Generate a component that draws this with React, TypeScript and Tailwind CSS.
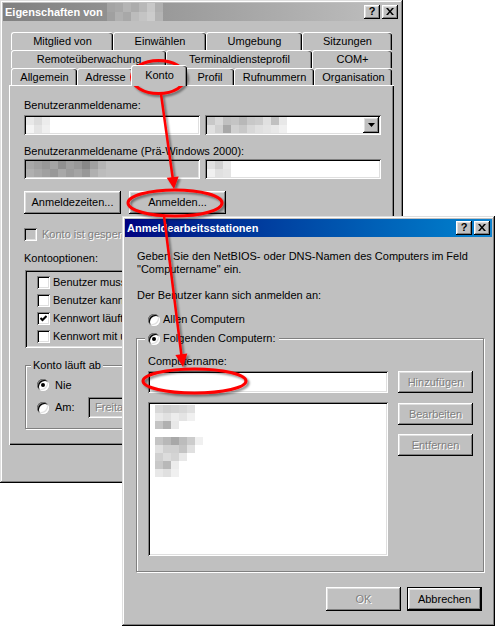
import React from 'react';

// classic 3D edges
const raised = 'shadow-[inset_-1px_-1px_0_#000,inset_1px_1px_0_#fff,inset_-2px_-2px_0_#808080,inset_2px_2px_0_#dfdfdf]';
const defaultRaised = 'shadow-[inset_0_0_0_1px_#000,inset_-2px_-2px_0_#000,inset_2px_2px_0_#fff,inset_-3px_-3px_0_#808080,inset_3px_3px_0_#dfdfdf]';
const sunken = 'shadow-[inset_1px_1px_0_#808080,inset_-1px_-1px_0_#fff,inset_2px_2px_0_#000,inset_-2px_-2px_0_#dfdfdf]';
const frame = 'shadow-[inset_-1px_-1px_0_#000,inset_1px_1px_0_#dfdfdf,inset_-2px_-2px_0_#808080,inset_2px_2px_0_#fff]';
const etched = 'border border-[#808080] shadow-[inset_1px_1px_0_#fff,1px_1px_0_#fff]';
const disabledText = 'text-[#808080] [text-shadow:1px_1px_0_#fff]';

// pixelated (blurred) names
const Mosaic = ({ rows, w = 8, h = 8 }: { rows: string[][]; w?: number; h?: number }) => (
  <div className="flex flex-col">
    {rows.map((r, i) => (
      <div key={i} className="flex">
        {r.map((c, j) => (
          <div key={j} style={{ width: w, height: h, background: c }} />
        ))}
      </div>
    ))}
  </div>
);

const TitleButtons = () => (
  <div className="flex gap-[2px]">
    <div className={`w-[16px] h-[14px] bg-[#c0c0c0] ${raised} flex items-center justify-center text-[11px] font-bold leading-none text-black pb-[1px]`}>
      ?
    </div>
    <div className={`w-[16px] h-[14px] bg-[#c0c0c0] ${raised} flex items-center justify-center pb-[1px]`}>
      <svg width="8" height="7" viewBox="0 0 8 7">
        <path d="M0 0h2l2 2.4L6 0h2L5 3.5 8 7H6L4 4.6 2 7H0l3-3.5z" fill="#000" />
      </svg>
    </div>
  </div>
);

const Btn = ({
  label,
  className = '',
  disabled = false,
  isDefault = false,
}: {
  label: string;
  className?: string;
  disabled?: boolean;
  isDefault?: boolean;
}) => (
  <div
    className={`flex items-center justify-center bg-[#c0c0c0] ${isDefault ? defaultRaised : raised} ${
      disabled ? disabledText : 'text-black'
    } ${className}`}
  >
    {label}
  </div>
);

const Check = ({ checked = false, disabled = false }: { checked?: boolean; disabled?: boolean }) => (
  <div className={`w-[13px] h-[13px] shrink-0 flex items-center justify-center ${disabled ? 'bg-[#c0c0c0]' : 'bg-white'} ${sunken}`}>
    {checked && (
      <svg width="7" height="7" viewBox="0 0 7 7">
        <polyline points="0.5,3 2.5,5 6.5,1" fill="none" stroke="#000" strokeWidth="2" />
      </svg>
    )}
  </div>
);

const Radio = ({ checked = false }: { checked?: boolean }) => (
  <div className={`w-[12px] h-[12px] shrink-0 rounded-full bg-white flex items-center justify-center ${sunken}`}>
    {checked && <div className="w-[4px] h-[4px] rounded-full bg-black" />}
  </div>
);

const tabBase =
  'bg-[#c0c0c0] border-l border-t border-white rounded-t-[3px] shadow-[inset_-1px_0_0_#000,inset_-2px_0_0_#808080] text-center whitespace-nowrap';

const Tab = ({ label, className, selected = false }: { label: string; className: string; selected?: boolean }) =>
  selected ? (
    <div className={`${tabBase} relative z-10 -mx-[2px] -mt-[3px] h-[21px] pt-[1px] leading-[17px] ${className}`}>{label}</div>
  ) : (
    <div className={`${tabBase} h-full leading-[16px] ${className}`}>{label}</div>
  );

const PropertiesDialog = () => (
  <div className={`absolute left-0 top-0 w-[403px] h-[483px] bg-[#c0c0c0] p-[3px] ${frame}`}>
    <div className="h-[18px] flex items-center bg-linear-to-r from-[#808080] to-[#c0c0c0] px-[2px]">
      <span className="font-bold text-white">Eigenschaften von</span>
      <div className="ml-[4px]">
        <Mosaic
          w={8}
          h={9}
          rows={[
            ['#a4a4a4', '#a8a8a8', '#b4b4b4', '#acacac', '#b8b8b8', '#c8c8c8', '#b0b0b0'],
            ['#a0a0a0', '#b0b0b0', '#a8a8a8', '#bcbcbc', '#c4c4c4', '#cccccc', '#b4b4b4'],
          ]}
        />
      </div>
      <div className="ml-auto">
        <TitleButtons />
      </div>
    </div>

    <div className="ml-[6px] mt-[11px] w-[385px]">
      <div className="flex h-[18px] pl-[2px]">
        <Tab label="Mitglied von" className="w-[102px]" />
        <Tab label="Einwählen" className="w-[93px]" />
        <Tab label="Umgebung" className="w-[96px]" />
        <Tab label="Sitzungen" className="w-[90px]" />
      </div>
      <div className="flex h-[18px] pl-[2px]">
        <Tab label="Remoteüberwachung" className="w-[155px]" />
        <Tab label="Terminaldiensteprofil" className="w-[146px]" />
        <Tab label="COM+" className="w-[80px]" />
      </div>
      <div className="flex h-[17px] pl-[2px]">
        <Tab label="Allgemein" className="w-[66px]" />
        <Tab label="Adresse" className="w-[56px]" />
        <Tab label="Konto" className="w-[56px]" selected />
        <Tab label="Profil" className="w-[49px]" />
        <Tab label="Rufnummern" className="w-[80px]" />
        <Tab label="Organisation" className="w-[78px]" />
      </div>

      <div className="h-[360px] border-l border-t border-white shadow-[inset_-1px_-1px_0_#000,inset_-2px_-2px_0_#808080] pl-[14px] pt-[13px]">
        <div className="h-[13px] leading-[13px]">Benutzeranmeldename:</div>
        <div className="mt-[3px] flex gap-[5px]">
          <div className={`w-[176px] h-[20px] bg-white p-[2px] ${sunken}`}>
            <Mosaic rows={[['#e8e8e8', '#dcdcdc', '#ececec'], ['#f4f4f4', '#e4e4e4', '#f0f0f0']]} />
          </div>
          <div className={`w-[176px] h-[20px] bg-white p-[2px] flex ${sunken}`}>
            <Mosaic
              rows={[
                ['#c8c8c8', '#d8d8d8', '#c0c0c0', '#c4c4c4', '#b8b8b8', '#c8c8c8', '#cccccc', '#e0e0e0', '#c0c0c0', '#e8e8e8'],
                ['#e0e0e0', '#d0d0d0', '#a8a8a8', '#d0d0d0', '#c8c8c8', '#d8d8d8', '#e0e0e0', '#e4e4e4', '#e8e8e8', '#f0f0f0'],
              ]}
            />
            <div className={`ml-auto w-[16px] h-[16px] bg-[#c0c0c0] flex items-center justify-center ${raised}`}>
              <svg width="7" height="4" viewBox="0 0 7 4">
                <path d="M0 0h7L3.5 4z" fill="#000" />
              </svg>
            </div>
          </div>
        </div>

        <div className="mt-[10px] h-[13px] leading-[13px]">Benutzeranmeldename (Prä-Windows 2000):</div>
        <div className="mt-[1px] flex gap-[5px]">
          <div className={`w-[176px] h-[20px] bg-[#c0c0c0] p-[2px] ${sunken}`}>
            <Mosaic
              rows={[
                ['#a8a8a8', '#a0a0a0', '#989898', '#a4a4a4', '#909090', '#a0a0a0', '#989898', '#888888', '#a0a0a0', '#b4b4b4'],
                ['#b0b0b0', '#a8a8a8', '#a0a0a0', '#989898', '#a8a8a8', '#9c9c9c', '#a4a4a4', '#989898', '#b0b0b0', '#bcbcbc'],
              ]}
            />
          </div>
          <div className={`w-[176px] h-[20px] bg-white p-[2px] ${sunken}`}>
            <Mosaic rows={[['#e0e0e0', '#d0d0d0', '#e8e8e8'], ['#f0f0f0', '#e0e0e0', '#e4e4e4']]} />
          </div>
        </div>

        <div className="mt-[12px] flex gap-[8px]">
          <Btn label="Anmeldezeiten..." className="w-[97px] h-[23px]" />
          <Btn label="Anmelden..." className="w-[97px] h-[23px]" />
        </div>

        <div className="mt-[14px] h-[13px] flex items-center gap-[5px]">
          <Check disabled />
          <span className={disabledText}>Konto ist gesperrt</span>
        </div>

        <div className="mt-[11px] h-[13px] leading-[13px]">Kontooptionen:</div>
        <div className={`mt-[5px] ml-[1px] w-[356px] h-[78px] bg-[#c0c0c0] pt-[3px] pl-[12px] ${sunken}`}>
          {[
            ['Benutzer muss Kennwort bei der nächsten Anmeldung ändern', false],
            ['Benutzer kann Kennwort nicht ändern', false],
            ['Kennwort läuft nie ab', true],
            ['Kennwort mit umkehrbarer Verschlüsselung speichern', false],
          ].map(([label, checked]) => (
            <div key={label as string} className="h-[18px] flex items-center gap-[3px]">
              <Check checked={checked as boolean} />
              <span>{label as string}</span>
            </div>
          ))}
        </div>

        <div className={`relative mt-[17px] ml-[1px] w-[356px] h-[64px] pl-[11px] pt-[13px] ${etched}`}>
          <div className="absolute -top-[7px] left-[5px] bg-[#c0c0c0] px-[2px] leading-[13px]">Konto läuft ab</div>
          <div className="h-[12px] flex items-center gap-[6px]">
            <Radio checked />
            <span>Nie</span>
          </div>
          <div className="mt-[6px] h-[21px] flex items-center gap-[6px]">
            <Radio />
            <span className="w-[27px]">Am:</span>
            <div className={`w-[260px] h-[21px] bg-[#c0c0c0] pl-[7px] flex items-center ${sunken}`}>
              <span className={disabledText}>Freitag, 1. Juni 2001</span>
            </div>
          </div>
        </div>
      </div>
    </div>

    <div className="mt-[8px] flex justify-end gap-[6px] pr-[6px]">
      <Btn label="OK" className="w-[75px] h-[23px]" isDefault />
      <Btn label="Abbrechen" className="w-[75px] h-[23px]" />
      <Btn label="Übernehmen" className="w-[75px] h-[23px]" />
    </div>
  </div>
);

const WorkstationsDialog = () => (
  <div className={`absolute left-[122px] top-[216px] w-[373px] h-[410px] bg-[#c0c0c0] p-[3px] ${frame}`}>
    <div className="h-[18px] flex items-center bg-linear-to-r from-[#000080] to-[#1084d0] px-[2px]">
      <span className="font-bold text-white">Anmeldearbeitsstationen</span>
      <div className="ml-auto">
        <TitleButtons />
      </div>
    </div>

    <div className="pl-[12px] mt-[13px] leading-[13px]">
      Geben Sie den NetBIOS- oder DNS-Namen des Computers im Feld
      <br />
      "Computername" ein.
    </div>
    <div className="pl-[12px] mt-[13px] leading-[13px]">Der Benutzer kann sich anmelden an:</div>
    <div className="ml-[23px] mt-[11px] h-[13px] flex items-center gap-[3px]">
      <Radio />
      <span>Allen Computern</span>
    </div>

    <div className={`relative ml-[11px] mt-[12px] w-[348px] h-[234px] pl-[11px] ${etched}`}>
      <div className="absolute -top-[7px] left-[8px] bg-[#c0c0c0] px-[3px] h-[13px] flex items-center gap-[3px]">
        <Radio checked />
        <span>Folgenden Computern:</span>
      </div>
      <div className="pt-[16px] h-[29px] leading-[13px]">Computername:</div>
      <div className="mt-[3px] flex gap-[10px]">
        <div className={`w-[240px] h-[22px] bg-white ${sunken}`} />
        <Btn label="Hinzufügen" className="w-[75px] h-[22px]" disabled />
      </div>
      <div className="mt-[9px] flex gap-[10px]">
        <div className={`w-[240px] h-[154px] bg-white pl-[7px] pt-[3px] ${sunken}`}>
          <Mosaic
            rows={[
              ['#d8d8d8', '#d0d0d0', '#d4d4d4', '#d8d8d8', '#e0e0e0'],
              ['#e8e8e8', '#e0e0e0', '#ececec', '#e4e4e4', '#f0f0f0'],
              ['#c4c4c4', '#b0b0b0', '#e8e8e8', '#ffffff', '#ffffff'],
            ]}
          />
          <div className="mt-[8px]">
            <Mosaic
              rows={[
                ['#c4c4c4', '#b8b8b8', '#a8a8a8', '#bcbcbc', '#cccccc', '#f0f0f0'],
                ['#e0e0e0', '#d0d0d0', '#d0d0d0', '#c4c4c4', '#e0e0e0', '#ffffff'],
                ['#d0d0d0', '#dcdcdc', '#d4d4d4', '#e8e8e8', '#ffffff', '#ffffff'],
                ['#c8c8c8', '#b8b8b8', '#ececec', '#ffffff', '#ffffff', '#ffffff'],
                ['#e8e8e8', '#e0e0e0', '#f0f0f0', '#ffffff', '#ffffff', '#ffffff'],
              ]}
            />
          </div>
        </div>
        <div className="flex flex-col">
          <Btn label="Bearbeiten" className="mt-[1px] w-[75px] h-[22px]" disabled />
          <Btn label="Entfernen" className="mt-[9px] w-[75px] h-[22px]" disabled />
        </div>
      </div>
    </div>

    <div className="mt-[15px] flex justify-end gap-[6px] pr-[10px]">
      <Btn label="OK" className="w-[75px] h-[24px]" disabled />
      <Btn label="Abbrechen" className="w-[75px] h-[24px]" isDefault />
    </div>
  </div>
);

// red hand-drawn marks over the screenshot
const Annotations = () => (
  <svg className="absolute left-0 top-0 pointer-events-none" width="496" height="627" viewBox="0 0 496 627">
    <defs>
      <filter id="markShadow" x="-20%" y="-20%" width="140%" height="140%">
        <feDropShadow dx="2" dy="2" stdDeviation="1.2" floodColor="#000" floodOpacity="0.45" />
      </filter>
    </defs>
    <g filter="url(#markShadow)" stroke="#ff0000" strokeWidth="3" fill="none" strokeLinecap="round">
      <ellipse cx="158.5" cy="77" rx="27" ry="16.5" />
      <ellipse cx="175" cy="203" rx="47" ry="13" />
      <ellipse cx="194.5" cy="381" rx="51.5" ry="12" />
      <line x1="161" y1="94" x2="172.7" y2="178" strokeWidth="2.5" />
      <polygon points="174,189 166.7,177.7 178.7,176.5" fill="#ff0000" stroke="none" />
      <line x1="164" y1="216" x2="181.4" y2="355" strokeWidth="2.5" />
      <polygon points="183,367 175.4,354.9 187.3,353.4" fill="#ff0000" stroke="none" />
    </g>
  </svg>
);

const App: React.FC = () => {
  return (
    <div className="relative w-[496px] h-[627px] overflow-hidden bg-white font-['Liberation_Sans',Arial,sans-serif] text-[11px] text-black">
      <PropertiesDialog />
      <WorkstationsDialog />
      <Annotations />
    </div>
  );
};

export default App;
